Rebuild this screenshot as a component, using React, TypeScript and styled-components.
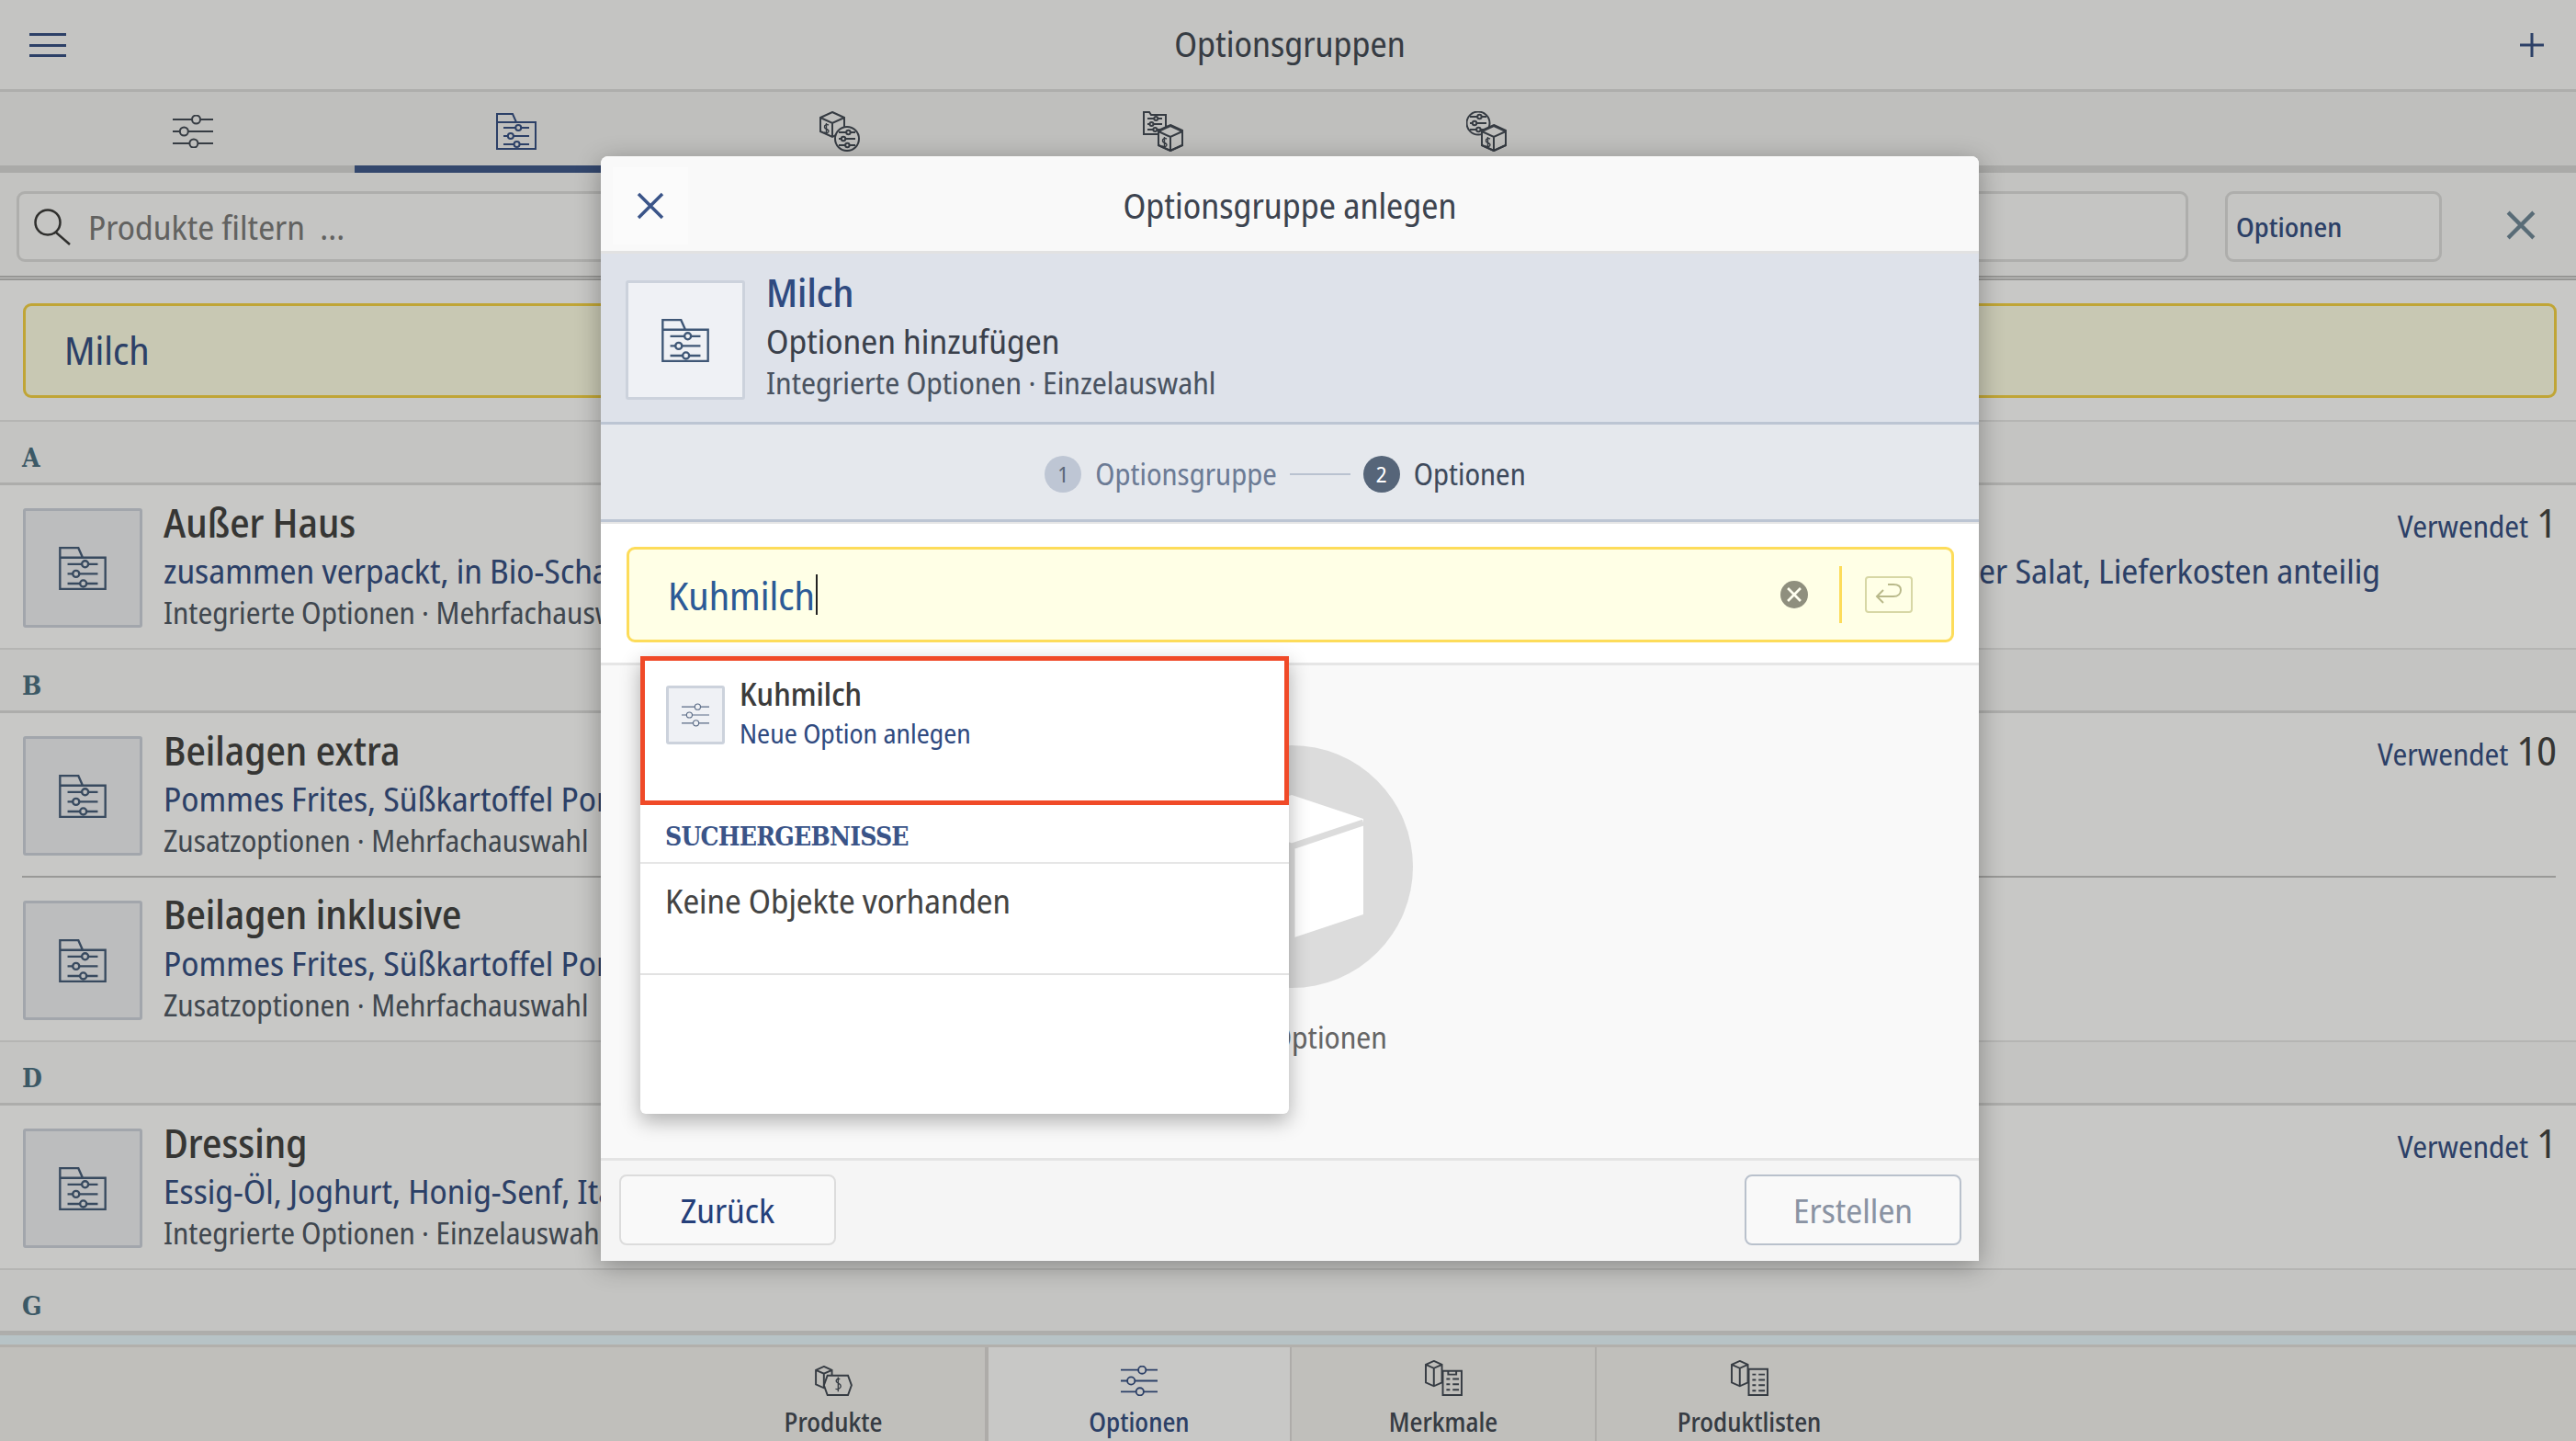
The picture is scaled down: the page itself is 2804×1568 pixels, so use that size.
import React from 'react';
import styled, { createGlobalStyle } from 'styled-components';

const NAVY = '#2f4a80';
const INK = '#3d4450';
const SLAB = '"DejaVu Serif", "Liberation Serif", serif';

const Global = createGlobalStyle`
  html, body { margin: 0; padding: 0; background: #fff; }
  body {
    font-family: "Noto Sans Display", "Open Sans", sans-serif;
    font-stretch: condensed;
    color: ${INK};
  }
  * { box-sizing: border-box; }
`;

/* ---------- icons ---------- */

type IconProps = { size?: number; h?: number; color?: string; stroke?: number };

const Svg: React.FC<IconProps & { vb: string; children: React.ReactNode }> = ({ size = 44, h, vb, color = 'currentColor', stroke = 2, children }) => (
  <svg width={size} height={h ?? size} viewBox={vb} fill="none" stroke={color} strokeWidth={stroke} style={{ display: 'block', flex: 'none' }}>
    {children}
  </svg>
);

const SliderLines = ({ x = 0, y = 0, w = 44, gap = 14, r = 4.5 }: { x?: number; y?: number; w?: number; gap?: number; r?: number }) => (
  <g transform={`translate(${x} ${y})`}>
    <path d={`M0 0H${w * 0.58 - r}M${w * 0.58 + r} 0H${w}`} />
    <circle cx={w * 0.58} cy={0} r={r} />
    <path d={`M0 ${gap}H${w * 0.28 - r}M${w * 0.28 + r} ${gap}H${w}`} />
    <circle cx={w * 0.28} cy={gap} r={r} />
    <path d={`M0 ${gap * 2}H${w * 0.52 - r}M${w * 0.52 + r} ${gap * 2}H${w}`} />
    <circle cx={w * 0.52} cy={gap * 2} r={r} />
  </g>
);

const Sliders = (p: IconProps) => (
  <Svg {...p} vb="0 0 44 36"><SliderLines y={5} gap={13} /></Svg>
);

const FolderOutline = () => <path d="M1 39V1H18L22 10H43V39ZM1 10H22" />;

const FolderSliders = (p: IconProps) => (
  <Svg {...p} vb="0 0 44 40">
    <FolderOutline />
    <SliderLines x={8} y={16} w={28} gap={9} r={3} />
  </Svg>
);

const Cube = ({ x = 0, y = 0, dollar = true }: { x?: number; y?: number; dollar?: boolean }) => (
  <g transform={`translate(${x} ${y})`}>
    <path d="M14 1L27 7V22L14 28L1 22V7ZM1 7L14 13L27 7M14 13V28" />
    {dollar && <path d="M10 15C8 14 5 15 5.5 17.5S10 19 10 21.5S7 24 5 23M7.5 13V25" strokeWidth={1.4} />}
  </g>
);

const CubeWithDisc = (p: IconProps) => (
  <Svg {...p} vb="0 0 44 44">
    <Cube x={0} y={0} />
    <circle cx={30} cy={30} r={13} fill="#f3f3f3" />
    <SliderLines x={21} y={23} w={18} gap={7} r={2.2} />
  </Svg>
);

const FolderWithCube = (p: IconProps) => (
  <Svg {...p} vb="0 0 44 44">
    <path d="M1 25V1H7L9 4H25V25Z" />
    <SliderLines x={5} y={8} w={16} gap={6} r={2} />
    <path d="M30 15L43 21V37L30 43L17 37V21Z" fill="#f3f3f3" />
    <Cube x={16} y={15} />
  </Svg>
);

const DiscWithCube = (p: IconProps) => (
  <Svg {...p} vb="0 0 44 44">
    <circle cx={13} cy={13} r={12.5} />
    <SliderLines x={4} y={6} w={18} gap={7} r={2.2} />
    <path d="M30 15L43 21V37L30 43L17 37V21Z" fill="#f3f3f3" />
    <Cube x={16} y={15} />
  </Svg>
);

const ProductTag = (p: IconProps) => (
  <Svg {...p} vb="0 0 42 34">
    <path d="M10 1L19 5V21L10 25L1 21V5ZM1 5L10 9L19 5M10 9V25" />
    <path d="M14 11H37L41 22L37 33H14L10 22Z" fill="#f4f3f1" />
    <path d="M28 15C25 14 23 16 24 18S29 20 29 23S25 27 23 26M26 13V29" strokeWidth={1.4} />
  </Svg>
);

const ProductFeatures = (p: IconProps) => (
  <Svg {...p} vb="0 0 42 40">
    <path d="M10 1L19 5V25L10 29L1 25V5ZM1 5L10 9L19 5M10 9V29" />
    <path d="M20 12H41V39H20Z" fill="#f4f3f1" />
    <path d="M26 12V16H35V12M24 21H28M31 21H38M24 27H28M31 27H38M24 33H28M31 33H38" />
  </Svg>
);

const ProductList = (p: IconProps) => (
  <Svg {...p} vb="0 0 42 40">
    <path d="M10 1L19 5V25L10 29L1 25V5ZM1 5L10 9L19 5M10 9V29" />
    <path d="M20 10H41V39H20Z" fill="#f4f3f1" />
    <path d="M24 16H28M31 16H38M24 22H28M31 22H38M24 28H28M31 28H38M24 34H28M31 34H38" />
  </Svg>
);

const Cross = ({ size = 30, color = 'currentColor', stroke = 3 }: IconProps) => (
  <Svg size={size} vb="0 0 30 30" color={color} stroke={stroke}><path d="M2 2L28 28M28 2L2 28" /></Svg>
);

/* ---------- app chrome behind the dialog ---------- */

const Page = styled.div`
  position: relative;
  width: 2804px;
  height: 1568px;
  overflow: hidden;
  display: flex;
  flex-direction: column;
`;

const Scrim = styled.div`
  position: absolute;
  inset: 0;
  background: rgba(35, 35, 27, 0.25);
`;

const TopBar = styled.header`
  flex: none;
  height: 100px;
  padding: 0 32px;
  display: flex;
  align-items: center;
  justify-content: space-between;
  background: #fafafa;
  border-bottom: 3px solid #dcdcdc;
`;

const Hamburger = styled.div`
  width: 40px;
  height: 26px;
  border-top: 3px solid ${NAVY};
  border-bottom: 3px solid ${NAVY};
  position: relative;
  &::after {
    content: '';
    position: absolute;
    left: 0;
    right: 0;
    top: 9px;
    height: 3px;
    background: ${NAVY};
  }
`;

const TopTitle = styled.h1`
  margin: 0 7px 2px 0;
  font-size: 37.5px;
  font-weight: 400;
  line-height: 1;
  color: ${INK};
`;

const Plus = styled.div`
  width: 26px;
  height: 26px;
  margin-right: 3px;
  color: ${NAVY};
`;

const TabStrip = styled.nav`
  flex: none;
  height: 88px;
  padding-left: 34px;
  display: flex;
  background: #f3f3f3;
  border-bottom: 8px solid #d7d7d7;
`;

const TabCell = styled.div<{ $active?: boolean }>`
  width: 352px;
  height: 88px;
  padding-top: 6px;
  display: flex;
  align-items: center;
  justify-content: center;
  color: ${p => (p.$active ? NAVY : INK)};
  border-bottom: 8px solid ${p => (p.$active ? '#385388' : 'transparent')};
`;

const FilterRow = styled.div`
  flex: none;
  height: 117px;
  padding: 20px 44px 0 18px;
  display: flex;
  background: #f8f8f8;
  border-bottom: 5px double #bdbdbd;
`;

const SearchField = styled.div`
  width: 2365px;
  height: 77px;
  padding-left: 16px;
  display: flex;
  align-items: center;
  gap: 19px;
  background: #fbfbfb;
  border: 3px solid #dcdcdc;
  border-radius: 9px;
  font-size: 37px;
  color: #777;
  white-space: pre;
`;

const ScopeSelect = styled.div`
  width: 236px;
  height: 77px;
  margin-left: 40px;
  padding-left: 9px;
  display: flex;
  align-items: center;
  background: #fbfbfb;
  border: 3px solid #dcdcdc;
  border-radius: 9px;
  font-size: 29.5px;
  font-weight: 500;
  color: ${NAVY};
`;

const FilterClose = styled.div`
  margin: 21px 0 0 70px;
  color: #6b8496;
`;

const CurrentBanner = styled.div`
  flex: none;
  height: 154px;
  padding: 25px 21px 26px 25px;
  background: #fff;
  border-bottom: 2px solid #e6e6e6;
`;

const CurrentBox = styled.div`
  height: 103px;
  padding: 0 0 2px 42px;
  display: flex;
  align-items: center;
  background: #ffffe6;
  border: 3px solid #f4d13f;
  border-radius: 9px;
  font-size: 42px;
  color: ${NAVY};
`;

const LetterHead = styled.div`
  flex: none;
  height: 69px;
  padding: 12px 0 0 24px;
  display: flex;
  align-items: center;
  background: #fafafa;
  border-bottom: 3px solid #dbdbdb;
  font-family: ${SLAB};
  font-weight: 700;
  font-size: 28px;
  color: #456b7f;
`;

const OptionRow = styled.article`
  flex: none;
  height: 177px;
  padding: 25px 21px 0 25px;
  display: flex;
  background: #fff;
`;

const RowRule = styled.div<{ $inset?: boolean }>`
  flex: none;
  height: 2px;
  margin: 0 ${p => (p.$inset ? '22px' : '0')} 0 ${p => (p.$inset ? '24px' : '0')};
  background: ${p => (p.$inset ? '#c0c0c0' : '#e6e6e6')};
`;

const Thumb = styled.div<{ $size?: number }>`
  flex: none;
  width: ${p => p.$size ?? 130}px;
  height: ${p => p.$size ?? 130}px;
  display: flex;
  align-items: center;
  justify-content: center;
  background: #eff1f5;
  border: 3px solid #ccd2dc;
  border-radius: 3px;
  color: #3f5776;
`;

const RowText = styled.div`
  flex: 1;
  min-width: 0;
  margin: -10px 0 0 23px;
`;

const TitleLine = styled.div`
  display: flex;
  justify-content: space-between;
  align-items: baseline;
  height: 50px;
  line-height: 50px;
`;

const RowTitle = styled.h3`
  margin: 0;
  font-size: 43px;
  font-weight: 500;
  color: #3c3c3c;
`;

const Usage = styled.div`
  font-size: 32.5px;
  color: ${NAVY};
`;

const UsageCount = styled.span`
  margin-left: 9px;
  font-size: 44px;
  color: #3c3c3c;
`;

const SubLine = styled.div`
  display: flex;
  justify-content: space-between;
  width: 2413px;
  height: 50px;
  margin-top: 3px;
  line-height: 50px;
  font-size: 37px;
  color: ${NAVY};
`;

const MetaLine = styled.div`
  height: 40px;
  margin-top: 1px;
  line-height: 40px;
  font-size: 32.5px;
  color: #4a5361;
`;

const Filler = styled.div`
  flex: 1;
  background: #e9f9ff;
  border-top: 2px solid #dcdcdc;
`;

const BottomBar = styled.footer`
  flex: none;
  height: 105px;
  padding-left: 8px;
  display: flex;
  justify-content: center;
  background: #f4f3f1;
  border-top: 3px solid #e2dfdc;
`;

const BottomTab = styled.div<{ $active?: boolean }>`
  width: 332px;
  height: 102px;
  padding-top: 9px;
  display: flex;
  flex-direction: column;
  align-items: center;
  background: ${p => (p.$active ? '#fff' : 'transparent')};
  color: ${p => (p.$active ? NAVY : INK)};
  border-right: 2px solid #dcdad8;
  &:first-child { border-left: 0; }
  &:nth-child(2) { border-left: 2px solid #dcdad8; }
  &:last-child { border-right: 0; }
`;

const BottomIconSlot = styled.div`
  height: 44px;
  display: flex;
  align-items: flex-end;
`;

const BottomLabel = styled.div`
  margin-top: 10px;
  font-size: 28px;
  font-weight: 500;
  line-height: 36px;
`;

/* ---------- dialog ---------- */

const Dialog = styled.section`
  position: absolute;
  left: 654px;
  top: 170px;
  width: 1500px;
  height: 1202px;
  display: flex;
  flex-direction: column;
  background: #fff;
  border-radius: 8px 8px 0 0;
  box-shadow: 0 6px 28px rgba(0, 0, 0, 0.32);
  overflow: visible;
`;

const DialogHead = styled.div`
  flex: none;
  height: 106px;
  padding-top: 4px;
  display: flex;
  align-items: center;
  position: relative;
  justify-content: center;
  background: #f9f9f9;
  border-bottom: 3px solid #e2e2e2;
  border-radius: 8px 8px 0 0;
`;

const DialogClose = styled.div`
  position: absolute;
  left: 13px;
  top: 12px;
  width: 82px;
  height: 84px;
  display: flex;
  align-items: center;
  justify-content: center;
  background: #fbfbfb;
  color: #3a5488;
`;

const DialogTitle = styled.h2`
  margin: 0;
  font-size: 37.5px;
  font-weight: 400;
  color: ${INK};
`;

const Summary = styled.div`
  flex: none;
  height: 186px;
  padding: 29px 27px 0;
  display: flex;
  background: #dee2ea;
  border-bottom: 3px solid #bcc5d3;
`;

const SummaryText = styled.div`
  margin: -12px 0 0 23px;
`;

const SummaryName = styled.div`
  height: 50px;
  line-height: 50px;
  font-size: 42px;
  font-weight: 500;
  color: #2f4a80;
`;

const SummaryAction = styled.div`
  height: 50px;
  margin-top: 3px;
  line-height: 50px;
  font-size: 37px;
  color: #3a404b;
`;

const SummaryMeta = styled.div`
  height: 40px;
  margin-top: 1px;
  line-height: 40px;
  font-size: 33px;
  color: #4a5361;
`;

const Stepper = styled.div`
  flex: none;
  height: 106px;
  padding: 4px 10px 0 0;
  display: flex;
  align-items: center;
  justify-content: center;
  background: #e5e8ed;
  border-bottom: 3px solid #bcc5d3;
`;

const StepDot = styled.div<{ $done?: boolean }>`
  width: 40px;
  height: 40px;
  display: flex;
  align-items: center;
  justify-content: center;
  border-radius: 50%;
  font-size: 24px;
  background: ${p => (p.$done ? '#566579' : '#bec6d4')};
  color: ${p => (p.$done ? '#fff' : '#5a6778')};
`;

const StepLabel = styled.div<{ $done?: boolean }>`
  margin-left: 15px;
  font-size: 32px;
  color: ${p => (p.$done ? '#3e4a5c' : '#6c7b95')};
`;

const StepLine = styled.div`
  width: 66px;
  height: 2px;
  margin: 0 14px;
  background: #b9c2d0;
`;

const SearchZone = styled.div`
  flex: none;
  height: 156px;
  padding: 25px 27px 0 28px;
  background: #fff;
  border-top: 2px solid #e6e6e6;
  border-bottom: 3px solid #e6e6e6;
`;

const SearchBox = styled.div`
  height: 104px;
  padding: 0 42px 0 42px;
  display: flex;
  align-items: center;
  background: #ffffe6;
  border: 3px solid #fddc5a;
  border-radius: 9px;
`;

const SearchValue = styled.div`
  flex: 1;
  display: flex;
  align-items: center;
  font-size: 42px;
  color: #2c5a96;
`;

const Caret = styled.span`
  width: 2px;
  height: 44px;
  margin-left: 1px;
  background: #222;
`;

const ClearDot = styled.div`
  width: 30px;
  height: 30px;
  display: flex;
  align-items: center;
  justify-content: center;
  border-radius: 50%;
  background: #8f8f7e;
  color: #fffff0;
`;

const SearchDivider = styled.div`
  width: 3px;
  height: 62px;
  margin: 0 25px 0 34px;
  background: #fddc5a;
`;

const EnterKey = styled.div`
  width: 52px;
  height: 40px;
  display: flex;
  align-items: center;
  justify-content: center;
  border: 2px solid #d7d7a5;
  border-radius: 4px;
  color: #b9b98a;
`;

const DialogBody = styled.div`
  flex: 1;
  padding: 87px 0 0 4px;
  display: flex;
  flex-direction: column;
  align-items: center;
  background: #f9f9f9;
`;

const EmptyCircle = styled.div`
  width: 264px;
  height: 264px;
  border-radius: 50%;
  background: #dcdcdc;
`;

const EmptyLabel = styled.div`
  margin-top: 31px;
  font-size: 33px;
  color: #666;
`;

const DialogFoot = styled.div`
  flex: none;
  height: 112px;
  padding: 15px 19px 0 20px;
  display: flex;
  justify-content: space-between;
  background: #f5f5f5;
  border-top: 3px solid #e4e4e4;
`;

const FootButton = styled.button<{ $disabled?: boolean }>`
  width: 236px;
  height: 77px;
  padding: 0;
  font: inherit;
  font-size: 37px;
  font-stretch: condensed;
  background: #f9f9f9;
  border: 2px solid ${p => (p.$disabled ? '#b9c1cc' : '#dcdcdc')};
  border-radius: 8px;
  color: ${p => (p.$disabled ? '#8a93a3' : '#25407a')};
`;

const Suggestions = styled.div`
  position: absolute;
  left: 43px;
  top: 544px;
  width: 706px;
  height: 498px;
  background: #fff;
  border-radius: 0 0 6px 6px;
  box-shadow: 0 8px 22px rgba(0, 0, 0, 0.3);
`;

const CreateItem = styled.div`
  height: 162px;
  padding: 27px 0 0 23px;
  display: flex;
  border: 5px solid #f04a28;
`;

const CreateText = styled.div`
  margin: -11px 0 0 16px;
`;

const CreateName = styled.div`
  height: 40px;
  line-height: 40px;
  font-size: 34px;
  font-weight: 500;
  color: #3c3c3c;
`;

const CreateHint = styled.div`
  height: 40px;
  margin-top: 3px;
  line-height: 40px;
  font-size: 29px;
  color: ${NAVY};
`;

const GroupHead = styled.div`
  height: 64px;
  padding: 6px 0 0 27px;
  display: flex;
  align-items: center;
  border-bottom: 2px solid #e6e6e6;
  font-family: ${SLAB};
  font-weight: 700;
  font-size: 28px;
  letter-spacing: -0.8px;
  color: #3a5488;
`;

const NoResults = styled.div`
  height: 121px;
  padding: 18px 0 0 27px;
  border-bottom: 2px solid #e2e2e2;
  font-size: 36.5px;
  line-height: 44px;
  color: #444;
`;

/* ---------- data ---------- */

type Row = {
  title: string;
  sub: string;
  tail?: string;
  meta: string;
  used?: number;
  inset?: boolean;
};

const sections: { letter: string; rows: Row[] }[] = [
  {
    letter: 'A',
    rows: [{
      title: 'Außer Haus',
      sub: 'zusammen verpackt, in Bio-Schale',
      tail: 'gemischter Salat, Lieferkosten anteilig',
      meta: 'Integrierte Optionen · Mehrfachauswahl',
      used: 1,
    }],
  },
  {
    letter: 'B',
    rows: [
      { title: 'Beilagen extra', sub: 'Pommes Frites, Süßkartoffel Pommes', meta: 'Zusatzoptionen · Mehrfachauswahl', used: 10, inset: true },
      { title: 'Beilagen inklusive', sub: 'Pommes Frites, Süßkartoffel Pommes', meta: 'Zusatzoptionen · Mehrfachauswahl' },
    ],
  },
  {
    letter: 'D',
    rows: [{ title: 'Dressing', sub: 'Essig-Öl, Joghurt, Honig-Senf, Italian', meta: 'Integrierte Optionen · Einzelauswahl', used: 1 }],
  },
];

export default function App() {
  return (
    <Page>
      <Global />
      <TopBar>
        <Hamburger />
        <TopTitle>Optionsgruppen</TopTitle>
        <Plus><Svg size={26} vb="0 0 26 26" stroke={3}><path d="M13 0V26M0 13H26" /></Svg></Plus>
      </TopBar>

      <TabStrip>
        <TabCell><Sliders size={44} h={36} /></TabCell>
        <TabCell $active><FolderSliders size={44} h={40} /></TabCell>
        <TabCell><CubeWithDisc /></TabCell>
        <TabCell><FolderWithCube /></TabCell>
        <TabCell><DiscWithCube /></TabCell>
      </TabStrip>

      <FilterRow>
        <SearchField>
          <Svg size={40} vb="0 0 40 40" stroke={2.5} color="#333">
            <circle cx="15" cy="15" r="13.5" />
            <path d="M24 26L39 39" />
          </Svg>
          Produkte filtern  ...
        </SearchField>
        <ScopeSelect>Optionen</ScopeSelect>
        <FilterClose><Cross size={32} stroke={4} /></FilterClose>
      </FilterRow>

      <CurrentBanner>
        <CurrentBox>Milch</CurrentBox>
      </CurrentBanner>

      {sections.map(section => (
        <React.Fragment key={section.letter}>
          <LetterHead>{section.letter}</LetterHead>
          {section.rows.map(row => (
            <React.Fragment key={row.title}>
              <OptionRow>
                <Thumb><FolderSliders size={52} h={47} /></Thumb>
                <RowText>
                  <TitleLine>
                    <RowTitle>{row.title}</RowTitle>
                    {row.used !== undefined && (
                      <Usage>Verwendet<UsageCount>{row.used}</UsageCount></Usage>
                    )}
                  </TitleLine>
                  <SubLine>
                    <span>{row.sub}</span>
                    {row.tail && <span>{row.tail}</span>}
                  </SubLine>
                  <MetaLine>{row.meta}</MetaLine>
                </RowText>
              </OptionRow>
              <RowRule $inset={row.inset} />
            </React.Fragment>
          ))}
        </React.Fragment>
      ))}
      <LetterHead>G</LetterHead>
      <Filler />

      <BottomBar>
        <BottomTab>
          <BottomIconSlot><ProductTag size={41} h={33} /></BottomIconSlot>
          <BottomLabel>Produkte</BottomLabel>
        </BottomTab>
        <BottomTab $active>
          <BottomIconSlot><Sliders size={40} h={33} /></BottomIconSlot>
          <BottomLabel>Optionen</BottomLabel>
        </BottomTab>
        <BottomTab>
          <BottomIconSlot><ProductFeatures size={41} h={39} /></BottomIconSlot>
          <BottomLabel>Merkmale</BottomLabel>
        </BottomTab>
        <BottomTab>
          <BottomIconSlot><ProductList size={41} h={39} /></BottomIconSlot>
          <BottomLabel>Produktlisten</BottomLabel>
        </BottomTab>
      </BottomBar>

      <Scrim />

      <Dialog>
        <DialogHead>
          <DialogClose><Cross size={30} stroke={3.5} /></DialogClose>
          <DialogTitle>Optionsgruppe anlegen</DialogTitle>
        </DialogHead>

        <Summary>
          <Thumb><FolderSliders size={52} h={47} /></Thumb>
          <SummaryText>
            <SummaryName>Milch</SummaryName>
            <SummaryAction>Optionen hinzufügen</SummaryAction>
            <SummaryMeta>Integrierte Optionen · Einzelauswahl</SummaryMeta>
          </SummaryText>
        </Summary>

        <Stepper>
          <StepDot>1</StepDot>
          <StepLabel>Optionsgruppe</StepLabel>
          <StepLine />
          <StepDot $done>2</StepDot>
          <StepLabel $done>Optionen</StepLabel>
        </Stepper>

        <SearchZone>
          <SearchBox>
            <SearchValue>Kuhmilch<Caret /></SearchValue>
            <ClearDot><Cross size={16} stroke={5} /></ClearDot>
            <SearchDivider />
            <EnterKey>
              <Svg size={30} h={24} vb="0 0 30 24" stroke={2}>
                <path d="M9 7L2 14L9 21M2 14H20C25 14 28 11 28 7S25 1 20 1H14" />
              </Svg>
            </EnterKey>
          </SearchBox>
        </SearchZone>

        <DialogBody>
          <EmptyCircle>
            <svg width="264" height="264" viewBox="0 0 264 264" style={{ display: 'block' }}>
              <path d="M132 54L210 80V184L132 210L54 184V80Z" fill="#fff" />
              <path d="M54 84L132 110L210 84M132 110V210" fill="none" stroke="#dcdcdc" strokeWidth="7" />
            </svg>
          </EmptyCircle>
          <EmptyLabel>Keine Optionen</EmptyLabel>
        </DialogBody>

        <DialogFoot>
          <FootButton>Zurück</FootButton>
          <FootButton $disabled>Erstellen</FootButton>
        </DialogFoot>

        <Suggestions>
          <CreateItem>
            <Thumb $size={64}><Sliders size={30} h={26} color="#5a6b85" stroke={1.6} /></Thumb>
            <CreateText>
              <CreateName>Kuhmilch</CreateName>
              <CreateHint>Neue Option anlegen</CreateHint>
            </CreateText>
          </CreateItem>
          <GroupHead>SUCHERGEBNISSE</GroupHead>
          <NoResults>Keine Objekte vorhanden</NoResults>
        </Suggestions>
      </Dialog>
    </Page>
  );
}
